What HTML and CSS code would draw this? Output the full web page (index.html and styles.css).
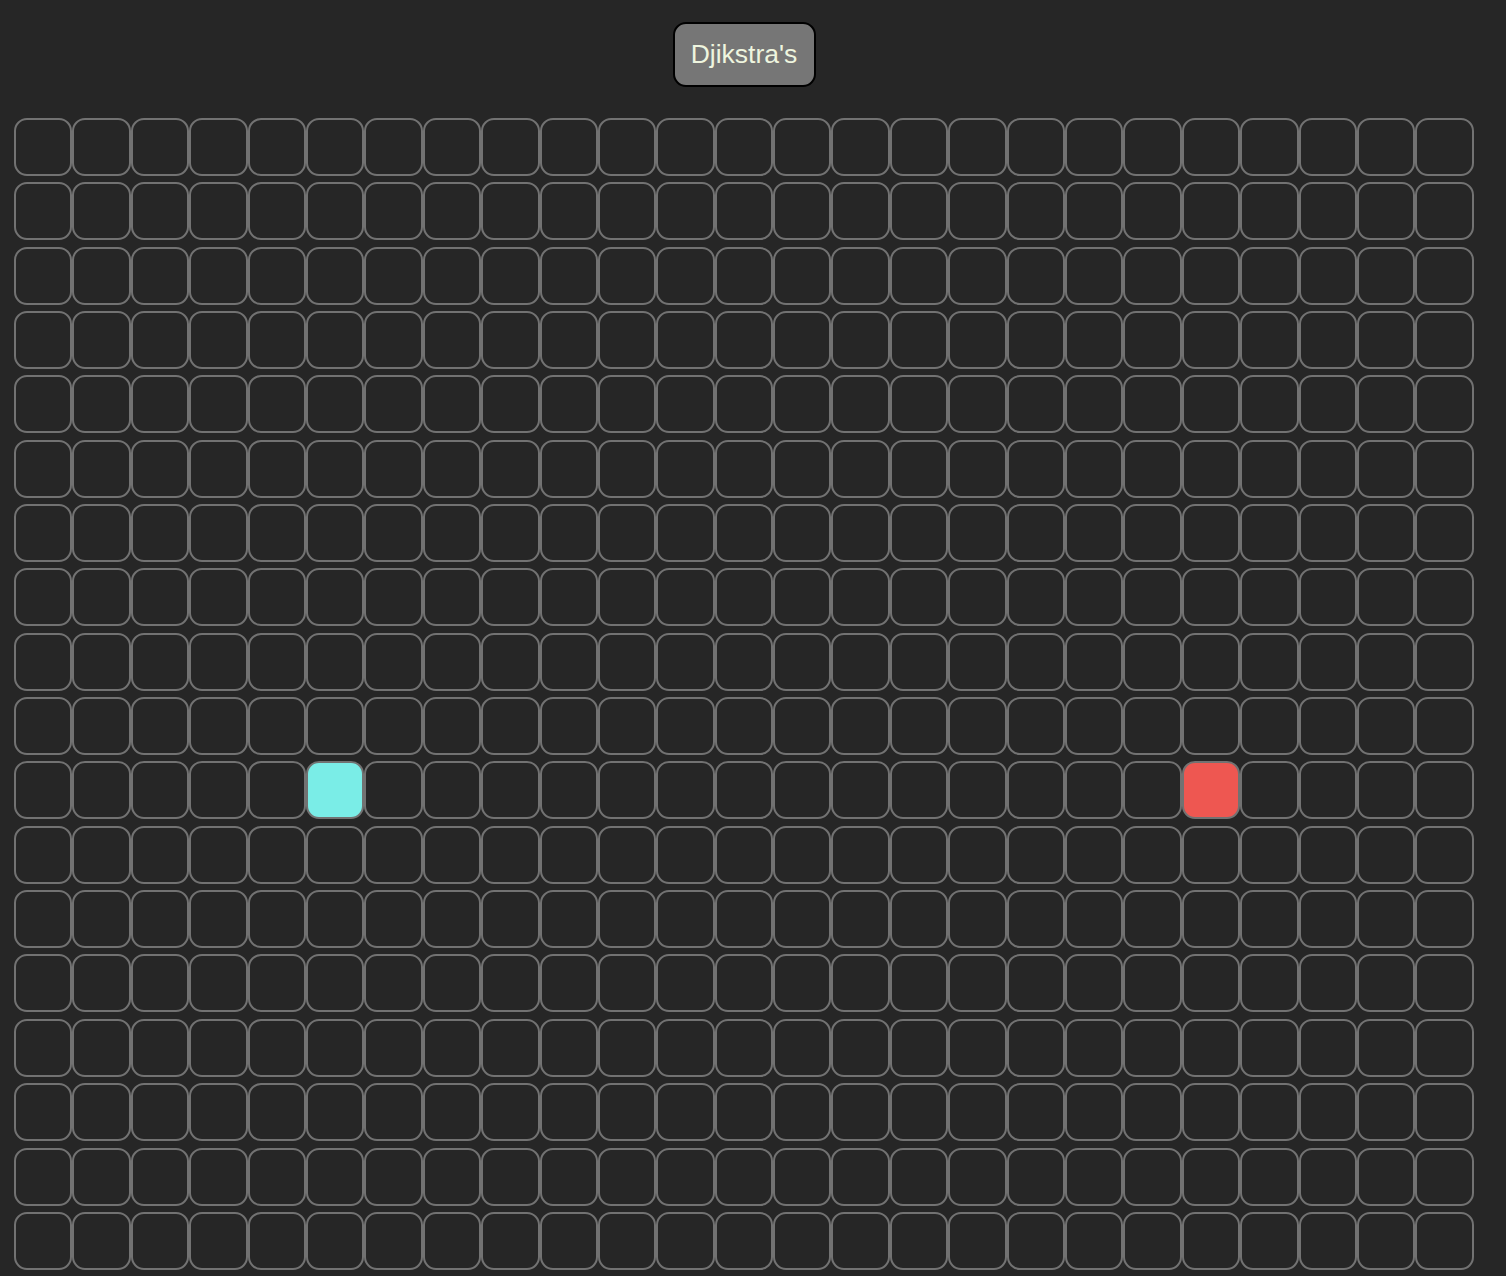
FILE: index.html
```html
<!DOCTYPE html>
<html>
<head>
<meta charset="utf-8">
<link rel="stylesheet" href="styles.css">
</head>
<body>
<div class="page">
  <div class="toolbar"><button class="algo-btn">Djikstra's</button></div>
  <div class="grid">
<div class="cell"></div><div class="cell"></div><div class="cell"></div><div class="cell"></div><div class="cell"></div><div class="cell"></div><div class="cell"></div><div class="cell"></div><div class="cell"></div><div class="cell"></div><div class="cell"></div><div class="cell"></div><div class="cell"></div><div class="cell"></div><div class="cell"></div><div class="cell"></div><div class="cell"></div><div class="cell"></div><div class="cell"></div><div class="cell"></div><div class="cell"></div><div class="cell"></div><div class="cell"></div><div class="cell"></div><div class="cell"></div>
<div class="cell"></div><div class="cell"></div><div class="cell"></div><div class="cell"></div><div class="cell"></div><div class="cell"></div><div class="cell"></div><div class="cell"></div><div class="cell"></div><div class="cell"></div><div class="cell"></div><div class="cell"></div><div class="cell"></div><div class="cell"></div><div class="cell"></div><div class="cell"></div><div class="cell"></div><div class="cell"></div><div class="cell"></div><div class="cell"></div><div class="cell"></div><div class="cell"></div><div class="cell"></div><div class="cell"></div><div class="cell"></div>
<div class="cell"></div><div class="cell"></div><div class="cell"></div><div class="cell"></div><div class="cell"></div><div class="cell"></div><div class="cell"></div><div class="cell"></div><div class="cell"></div><div class="cell"></div><div class="cell"></div><div class="cell"></div><div class="cell"></div><div class="cell"></div><div class="cell"></div><div class="cell"></div><div class="cell"></div><div class="cell"></div><div class="cell"></div><div class="cell"></div><div class="cell"></div><div class="cell"></div><div class="cell"></div><div class="cell"></div><div class="cell"></div>
<div class="cell"></div><div class="cell"></div><div class="cell"></div><div class="cell"></div><div class="cell"></div><div class="cell"></div><div class="cell"></div><div class="cell"></div><div class="cell"></div><div class="cell"></div><div class="cell"></div><div class="cell"></div><div class="cell"></div><div class="cell"></div><div class="cell"></div><div class="cell"></div><div class="cell"></div><div class="cell"></div><div class="cell"></div><div class="cell"></div><div class="cell"></div><div class="cell"></div><div class="cell"></div><div class="cell"></div><div class="cell"></div>
<div class="cell"></div><div class="cell"></div><div class="cell"></div><div class="cell"></div><div class="cell"></div><div class="cell"></div><div class="cell"></div><div class="cell"></div><div class="cell"></div><div class="cell"></div><div class="cell"></div><div class="cell"></div><div class="cell"></div><div class="cell"></div><div class="cell"></div><div class="cell"></div><div class="cell"></div><div class="cell"></div><div class="cell"></div><div class="cell"></div><div class="cell"></div><div class="cell"></div><div class="cell"></div><div class="cell"></div><div class="cell"></div>
<div class="cell"></div><div class="cell"></div><div class="cell"></div><div class="cell"></div><div class="cell"></div><div class="cell"></div><div class="cell"></div><div class="cell"></div><div class="cell"></div><div class="cell"></div><div class="cell"></div><div class="cell"></div><div class="cell"></div><div class="cell"></div><div class="cell"></div><div class="cell"></div><div class="cell"></div><div class="cell"></div><div class="cell"></div><div class="cell"></div><div class="cell"></div><div class="cell"></div><div class="cell"></div><div class="cell"></div><div class="cell"></div>
<div class="cell"></div><div class="cell"></div><div class="cell"></div><div class="cell"></div><div class="cell"></div><div class="cell"></div><div class="cell"></div><div class="cell"></div><div class="cell"></div><div class="cell"></div><div class="cell"></div><div class="cell"></div><div class="cell"></div><div class="cell"></div><div class="cell"></div><div class="cell"></div><div class="cell"></div><div class="cell"></div><div class="cell"></div><div class="cell"></div><div class="cell"></div><div class="cell"></div><div class="cell"></div><div class="cell"></div><div class="cell"></div>
<div class="cell"></div><div class="cell"></div><div class="cell"></div><div class="cell"></div><div class="cell"></div><div class="cell"></div><div class="cell"></div><div class="cell"></div><div class="cell"></div><div class="cell"></div><div class="cell"></div><div class="cell"></div><div class="cell"></div><div class="cell"></div><div class="cell"></div><div class="cell"></div><div class="cell"></div><div class="cell"></div><div class="cell"></div><div class="cell"></div><div class="cell"></div><div class="cell"></div><div class="cell"></div><div class="cell"></div><div class="cell"></div>
<div class="cell"></div><div class="cell"></div><div class="cell"></div><div class="cell"></div><div class="cell"></div><div class="cell"></div><div class="cell"></div><div class="cell"></div><div class="cell"></div><div class="cell"></div><div class="cell"></div><div class="cell"></div><div class="cell"></div><div class="cell"></div><div class="cell"></div><div class="cell"></div><div class="cell"></div><div class="cell"></div><div class="cell"></div><div class="cell"></div><div class="cell"></div><div class="cell"></div><div class="cell"></div><div class="cell"></div><div class="cell"></div>
<div class="cell"></div><div class="cell"></div><div class="cell"></div><div class="cell"></div><div class="cell"></div><div class="cell"></div><div class="cell"></div><div class="cell"></div><div class="cell"></div><div class="cell"></div><div class="cell"></div><div class="cell"></div><div class="cell"></div><div class="cell"></div><div class="cell"></div><div class="cell"></div><div class="cell"></div><div class="cell"></div><div class="cell"></div><div class="cell"></div><div class="cell"></div><div class="cell"></div><div class="cell"></div><div class="cell"></div><div class="cell"></div>
<div class="cell"></div><div class="cell"></div><div class="cell"></div><div class="cell"></div><div class="cell"></div><div class="cell start"></div><div class="cell"></div><div class="cell"></div><div class="cell"></div><div class="cell"></div><div class="cell"></div><div class="cell"></div><div class="cell"></div><div class="cell"></div><div class="cell"></div><div class="cell"></div><div class="cell"></div><div class="cell"></div><div class="cell"></div><div class="cell"></div><div class="cell end"></div><div class="cell"></div><div class="cell"></div><div class="cell"></div><div class="cell"></div>
<div class="cell"></div><div class="cell"></div><div class="cell"></div><div class="cell"></div><div class="cell"></div><div class="cell"></div><div class="cell"></div><div class="cell"></div><div class="cell"></div><div class="cell"></div><div class="cell"></div><div class="cell"></div><div class="cell"></div><div class="cell"></div><div class="cell"></div><div class="cell"></div><div class="cell"></div><div class="cell"></div><div class="cell"></div><div class="cell"></div><div class="cell"></div><div class="cell"></div><div class="cell"></div><div class="cell"></div><div class="cell"></div>
<div class="cell"></div><div class="cell"></div><div class="cell"></div><div class="cell"></div><div class="cell"></div><div class="cell"></div><div class="cell"></div><div class="cell"></div><div class="cell"></div><div class="cell"></div><div class="cell"></div><div class="cell"></div><div class="cell"></div><div class="cell"></div><div class="cell"></div><div class="cell"></div><div class="cell"></div><div class="cell"></div><div class="cell"></div><div class="cell"></div><div class="cell"></div><div class="cell"></div><div class="cell"></div><div class="cell"></div><div class="cell"></div>
<div class="cell"></div><div class="cell"></div><div class="cell"></div><div class="cell"></div><div class="cell"></div><div class="cell"></div><div class="cell"></div><div class="cell"></div><div class="cell"></div><div class="cell"></div><div class="cell"></div><div class="cell"></div><div class="cell"></div><div class="cell"></div><div class="cell"></div><div class="cell"></div><div class="cell"></div><div class="cell"></div><div class="cell"></div><div class="cell"></div><div class="cell"></div><div class="cell"></div><div class="cell"></div><div class="cell"></div><div class="cell"></div>
<div class="cell"></div><div class="cell"></div><div class="cell"></div><div class="cell"></div><div class="cell"></div><div class="cell"></div><div class="cell"></div><div class="cell"></div><div class="cell"></div><div class="cell"></div><div class="cell"></div><div class="cell"></div><div class="cell"></div><div class="cell"></div><div class="cell"></div><div class="cell"></div><div class="cell"></div><div class="cell"></div><div class="cell"></div><div class="cell"></div><div class="cell"></div><div class="cell"></div><div class="cell"></div><div class="cell"></div><div class="cell"></div>
<div class="cell"></div><div class="cell"></div><div class="cell"></div><div class="cell"></div><div class="cell"></div><div class="cell"></div><div class="cell"></div><div class="cell"></div><div class="cell"></div><div class="cell"></div><div class="cell"></div><div class="cell"></div><div class="cell"></div><div class="cell"></div><div class="cell"></div><div class="cell"></div><div class="cell"></div><div class="cell"></div><div class="cell"></div><div class="cell"></div><div class="cell"></div><div class="cell"></div><div class="cell"></div><div class="cell"></div><div class="cell"></div>
<div class="cell"></div><div class="cell"></div><div class="cell"></div><div class="cell"></div><div class="cell"></div><div class="cell"></div><div class="cell"></div><div class="cell"></div><div class="cell"></div><div class="cell"></div><div class="cell"></div><div class="cell"></div><div class="cell"></div><div class="cell"></div><div class="cell"></div><div class="cell"></div><div class="cell"></div><div class="cell"></div><div class="cell"></div><div class="cell"></div><div class="cell"></div><div class="cell"></div><div class="cell"></div><div class="cell"></div><div class="cell"></div>
<div class="cell"></div><div class="cell"></div><div class="cell"></div><div class="cell"></div><div class="cell"></div><div class="cell"></div><div class="cell"></div><div class="cell"></div><div class="cell"></div><div class="cell"></div><div class="cell"></div><div class="cell"></div><div class="cell"></div><div class="cell"></div><div class="cell"></div><div class="cell"></div><div class="cell"></div><div class="cell"></div><div class="cell"></div><div class="cell"></div><div class="cell"></div><div class="cell"></div><div class="cell"></div><div class="cell"></div><div class="cell"></div>
  </div>
</div>
</body>
</html>
```

FILE: styles.css
```css
html, body {
  margin: 0;
  padding: 0;
  background: #262626;
  overflow: hidden;
}

.page {
  width: 1460px;
  padding: 22px 0 0 14px;
  font-family: "Liberation Sans", Arial, sans-serif;
}

.toolbar {
  display: flex;
  justify-content: center;
  margin-bottom: 31px;
}

.algo-btn {
  box-sizing: border-box;
  width: 143px;
  height: 65px;
  padding: 0;
  background: #767676;
  color: #eef5df;
  border: 2px solid #000;
  border-radius: 13px;
  font-family: "Liberation Sans", Arial, sans-serif;
  font-size: 26.5px;
  line-height: 1;
}

.grid {
  display: grid;
  grid-template-columns: repeat(25, 58.4px);
  grid-auto-rows: 58px;
  row-gap: 6.35px;
}

.cell {
  box-sizing: border-box;
  border: 2px solid #727272;
  border-radius: 13px;
  background: transparent;
}

.cell.start {
  background: #7aede7;
}

.cell.end {
  background: #ee5751;
}
```
